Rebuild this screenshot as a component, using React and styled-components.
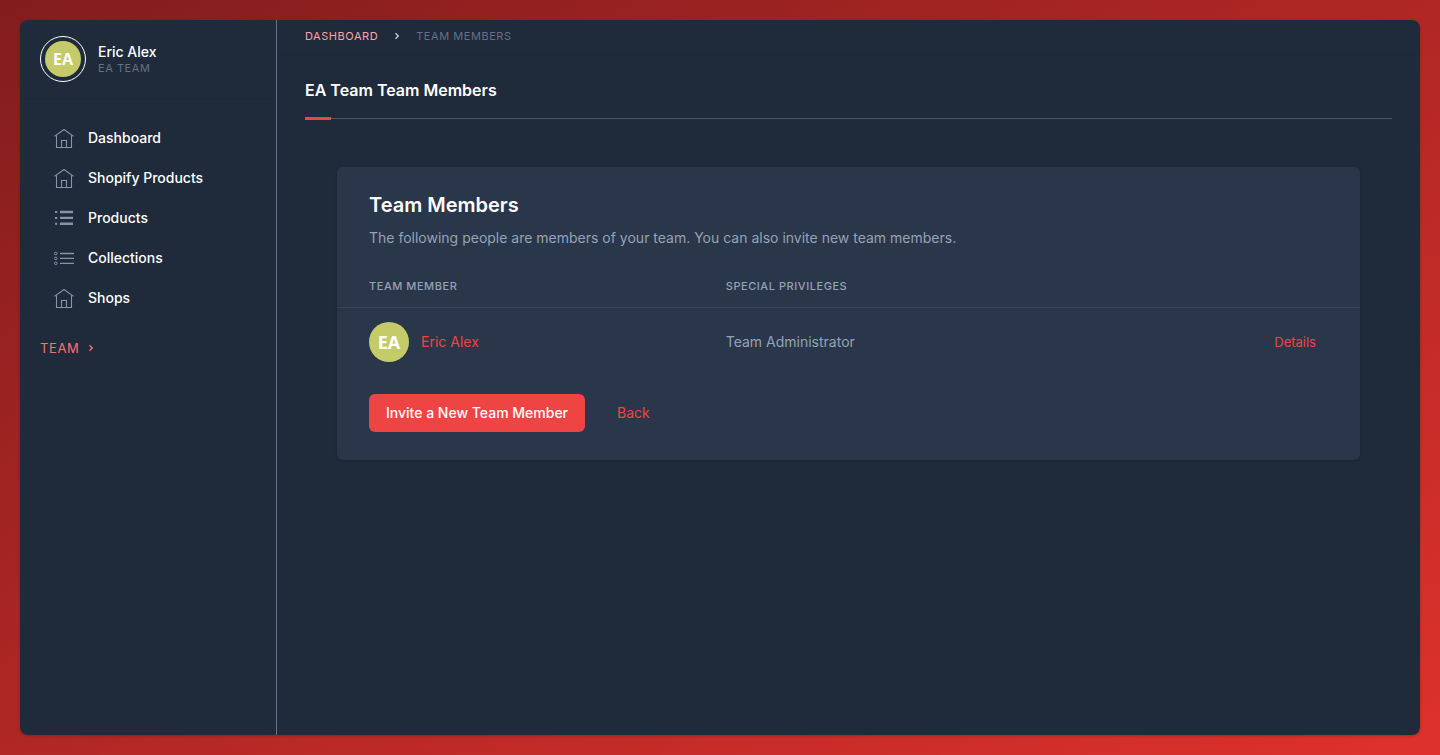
import React from "react";
import styled, { createGlobalStyle } from "styled-components";

const Global = createGlobalStyle`
  *, *::before, *::after { box-sizing: border-box; }
  body {
    margin: 0;
    font-family: Inter, "Liberation Sans", sans-serif;
    font-size: 14px;
    line-height: 20px;
    color: #ffffff;
  }
  a { color: inherit; text-decoration: none; }
  h1, h2, p, ul, ol { margin: 0; padding: 0; }
  ul, ol { list-style: none; }
`;

const Page = styled.div`
  display: flex;
  min-height: 100vh;
  padding: 20px;
  background: linear-gradient(to bottom right, #821d1d, #de312c);
`;

const Shell = styled.div`
  display: flex;
  flex: 1;
  overflow: hidden;
  border-radius: 8px;
  background: #1f2a3b;
  box-shadow: 0 1px 3px rgba(0, 0, 0, 0.2);
`;

const Sidebar = styled.aside`
  flex: none;
  width: 257px;
  border-right: 1px solid #66748a;
`;

const Profile = styled.div`
  display: flex;
  align-items: center;
  gap: 12px;
  padding: 16px 20px;
  border-bottom: 1px solid #1d2737;
`;

const Ring = styled.span`
  display: flex;
  padding: 4px;
  border: 1px solid #ffffff;
  border-radius: 50%;
`;

const Avatar = styled.span`
  display: flex;
  align-items: center;
  justify-content: center;
  width: ${(p) => (p.$large ? 40 : 36)}px;
  height: ${(p) => (p.$large ? 40 : 36)}px;
  border-radius: 50%;
  background: #c5cb68;
  color: #ffffff;
  font-family: "Open Sans", sans-serif;
  font-size: ${(p) => (p.$large ? 18 : 16)}px;
  font-weight: 700;
`;

const ProfileText = styled.div`
  display: flex;
  flex-direction: column;
  padding-top: 2px;
`;

const UserName = styled.span`
  line-height: 16px;
  font-weight: 500;
`;

const Caption = styled.span`
  font-size: 11px;
  line-height: 16px;
  letter-spacing: 0.05em;
  text-transform: uppercase;
  color: #647083;
`;

const Menu = styled.ul`
  display: flex;
  flex-direction: column;
  gap: 2px;
  padding: 20px 20px 0;
`;

const MenuLink = styled.a`
  display: flex;
  align-items: center;
  gap: 14px;
  height: 38px;
  padding: 0 14px;
  font-weight: 500;
`;

const MenuIcon = styled.svg`
  flex: none;
  width: 20px;
  height: 20px;
  fill: none;
  stroke: #8594a9;
`;

const TeamToggle = styled.button`
  display: flex;
  align-items: center;
  gap: 8px;
  margin: 21px 20px 0;
  padding: 0;
  border: 0;
  background: none;
  color: #f87171;
  font: inherit;
  font-size: 13px;
  letter-spacing: 0.05em;
  text-transform: uppercase;
  cursor: pointer;
`;

const Chevron = styled.svg`
  flex: none;
  width: 6px;
  height: 8px;
  fill: none;
  stroke: currentColor;
  stroke-width: 1.3;
`;

const Main = styled.main`
  flex: 1;
  min-width: 0;
`;

const Breadcrumbs = styled.ol`
  display: flex;
  align-items: center;
  gap: 16px;
  height: 35px;
  padding: 0 28px 2px;
  border-bottom: 1px solid #1d2737;
  font-size: 11px;
  letter-spacing: 0.05em;
  text-transform: uppercase;
`;

const Crumb = styled.li`
  display: flex;
  align-items: center;
  gap: 16px;
  color: ${(p) => (p.$current ? "#647083" : "#cbd5e1")};

  a { color: #fca5a5; }
`;

const Content = styled.div`
  padding: 24px 28px;
`;

const PageTitle = styled.h1`
  position: relative;
  padding-bottom: 17px;
  border-bottom: 1px solid #475569;
  font-size: 16px;
  line-height: 22px;
  font-weight: 600;

  &::after {
    content: "";
    position: absolute;
    bottom: -2px;
    left: 0;
    width: 26px;
    height: 3px;
    background: #ef4444;
  }
`;

const Card = styled.section`
  margin: 48px 32px 0;
  padding-bottom: 28px;
  border-radius: 6px;
  background: #2a3649;
  box-shadow: 0 1px 3px rgba(0, 0, 0, 0.15);
`;

const CardHeader = styled.header`
  display: flex;
  flex-direction: column;
  gap: 9px;
  padding: 24px 32px 17px;
`;

const CardTitle = styled.h2`
  font-size: 20px;
  line-height: 28px;
  font-weight: 600;
`;

const Lead = styled.p`
  color: #94a3b8;
`;

const Table = styled.table`
  width: 100%;
  border-collapse: collapse;
  table-layout: fixed;
  color: #94a3b8;
  text-align: left;
`;

const HeadCell = styled.th`
  width: ${(p) => p.$width || "auto"};
  height: 42px;
  padding: 0 0 0 ${(p) => (p.$first ? "32px" : 0)};
  border-bottom: 1px solid #364357;
  font-size: 11px;
  font-weight: 500;
  letter-spacing: 0.05em;
  text-transform: uppercase;
`;

const Cell = styled.td`
  height: 70px;
  padding: 0 44px 0 ${(p) => (p.$first ? "32px" : 0)};
  text-align: ${(p) => (p.$end ? "right" : "left")};
`;

const Member = styled.div`
  display: flex;
  align-items: center;
  gap: 12px;
`;

const TextLink = styled.a`
  color: #ef4444;
  font-size: ${(p) => (p.$small ? 13 : 14)}px;
`;

const Actions = styled.div`
  display: flex;
  align-items: center;
  gap: 32px;
  padding: 17px 32px 0;
`;

const PrimaryButton = styled.button`
  height: 38px;
  padding: 0 17px;
  border: 0;
  border-radius: 6px;
  background: #ef4444;
  color: #ffffff;
  font: inherit;
  font-weight: 500;
  cursor: pointer;
`;

const HomeIcon = () => (
  <MenuIcon viewBox="0 0 20 20" aria-hidden="true">
    <path strokeWidth="1.1" d="M0.4 8.4 10 1.5l9.6 6.9M2.5 7.4v12.1h15V7.4M7.5 19.5v-7h5v7" />
  </MenuIcon>
);

const ListIcon = () => (
  <MenuIcon viewBox="0 0 20 20" aria-hidden="true">
    <path strokeWidth="2.4" d="M6 4h13M6 9.9h13M6 15.8h13" />
    <path strokeWidth="2" d="M1 4h2.2M1 9.9h2.2M1 15.8h2.2" />
  </MenuIcon>
);

const BulletsIcon = () => (
  <MenuIcon viewBox="0 0 20 20" aria-hidden="true">
    <path strokeWidth="1.3" d="M6 5.5h14M6 10.4h14M6 15.3h14" />
    <circle cx="1.8" cy="5.5" r="1.3" />
    <circle cx="1.8" cy="10.4" r="1.3" />
    <circle cx="1.8" cy="15.3" r="1.3" />
  </MenuIcon>
);

const ChevronIcon = () => (
  <Chevron viewBox="0 0 6 8" aria-hidden="true">
    <path d="M1.5 1.2 4.3 4 1.5 6.8" />
  </Chevron>
);

const menu = [
  ["Dashboard", HomeIcon],
  ["Shopify Products", HomeIcon],
  ["Products", ListIcon],
  ["Collections", BulletsIcon],
  ["Shops", HomeIcon],
];

export default function App() {
  return (
    <>
      <Global />
      <Page>
        <Shell>
          <Sidebar>
            <Profile>
              <Ring>
                <Avatar>EA</Avatar>
              </Ring>
              <ProfileText>
                <UserName>Eric Alex</UserName>
                <Caption>EA Team</Caption>
              </ProfileText>
            </Profile>
            <nav>
              <Menu>
                {menu.map(([label, Icon]) => (
                  <li key={label}>
                    <MenuLink href="#">
                      <Icon />
                      {label}
                    </MenuLink>
                  </li>
                ))}
              </Menu>
              <TeamToggle type="button">
                Team
                <ChevronIcon />
              </TeamToggle>
            </nav>
          </Sidebar>
          <Main>
            <Breadcrumbs>
              <Crumb>
                <a href="#">Dashboard</a>
                <ChevronIcon />
              </Crumb>
              <Crumb $current>Team Members</Crumb>
            </Breadcrumbs>
            <Content>
              <PageTitle>EA Team Team Members</PageTitle>
              <Card>
                <CardHeader>
                  <CardTitle>Team Members</CardTitle>
                  <Lead>
                    The following people are members of your team. You can also invite new team members.
                  </Lead>
                </CardHeader>
                <Table>
                  <thead>
                    <tr>
                      <HeadCell $first $width="38%">Team Member</HeadCell>
                      <HeadCell>Special Privileges</HeadCell>
                      <HeadCell $width="20%" aria-label="Actions" />
                    </tr>
                  </thead>
                  <tbody>
                    <tr>
                      <Cell $first>
                        <Member>
                          <Avatar $large>EA</Avatar>
                          <TextLink href="#">Eric Alex</TextLink>
                        </Member>
                      </Cell>
                      <Cell>Team Administrator</Cell>
                      <Cell $end>
                        <TextLink href="#" $small>Details</TextLink>
                      </Cell>
                    </tr>
                  </tbody>
                </Table>
                <Actions>
                  <PrimaryButton type="button">Invite a New Team Member</PrimaryButton>
                  <TextLink href="#">Back</TextLink>
                </Actions>
              </Card>
            </Content>
          </Main>
        </Shell>
      </Page>
    </>
  );
}
